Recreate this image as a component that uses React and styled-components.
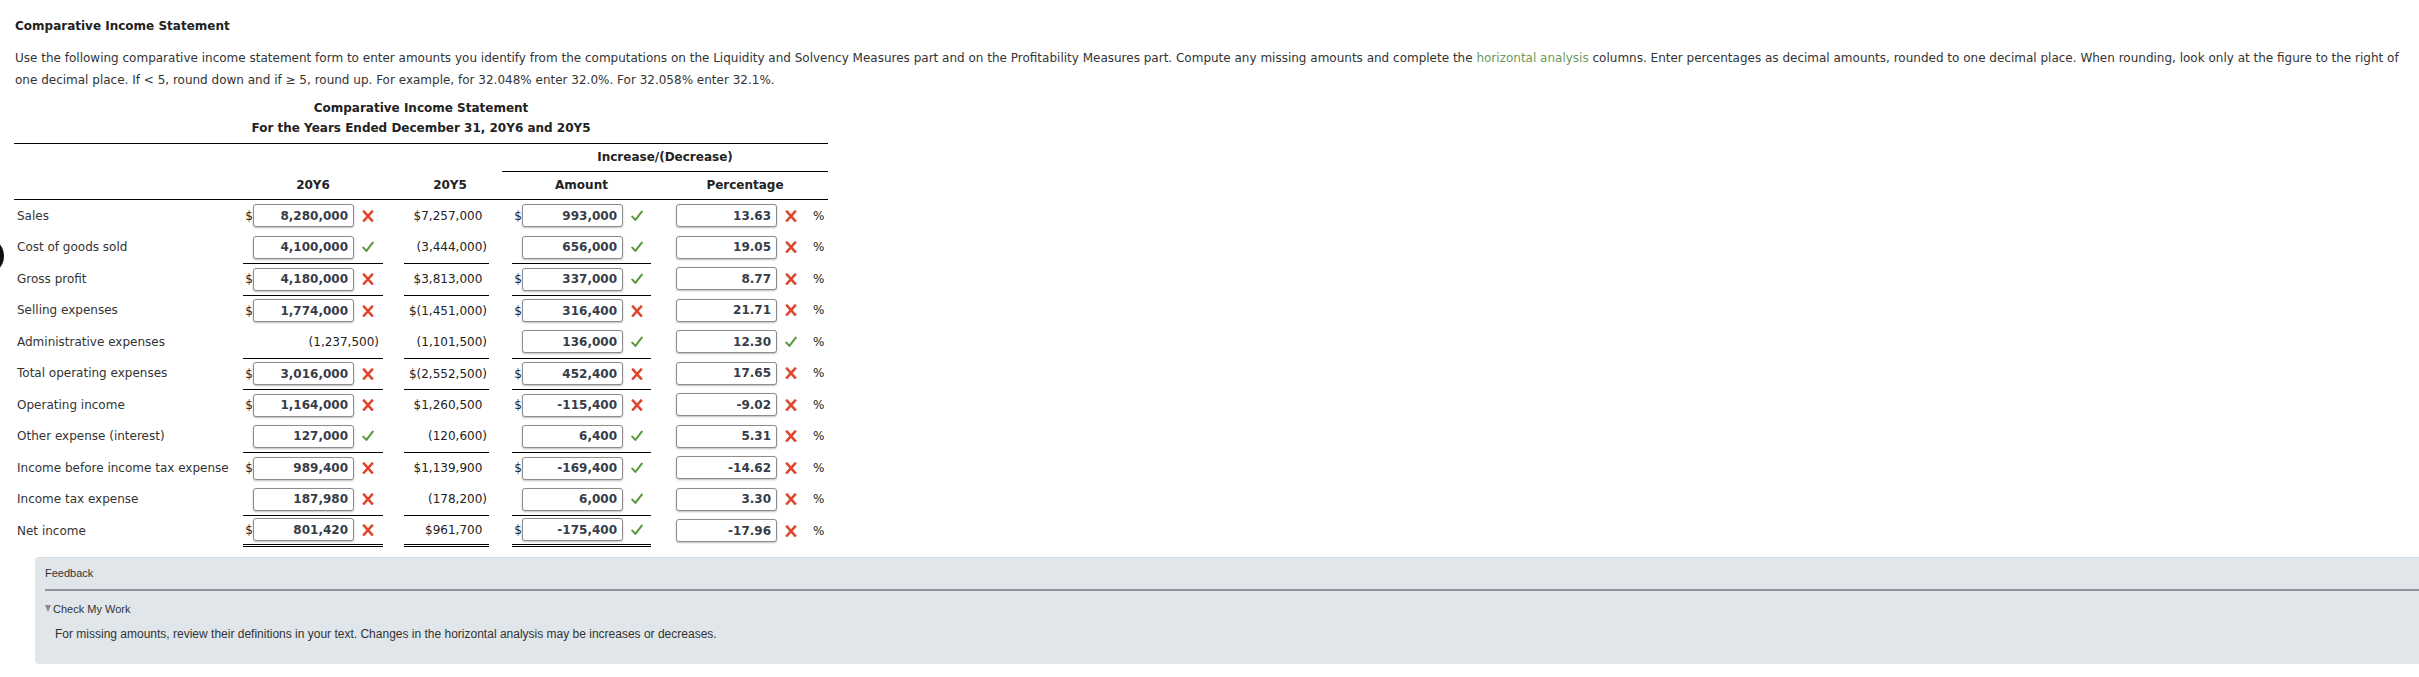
//-----------------------------------------------------------------------------
// Imports
//-----------------------------------------------------------------------------
import React from 'react'
import styled, { createGlobalStyle } from 'styled-components'
//-----------------------------------------------------------------------------
// Data
//-----------------------------------------------------------------------------
const rows = [
  { label: 'Sales', y6: { dollar: true, value: '8,280,000', ok: false }, y5: '$7,257,000', amt: { dollar: true, value: '993,000', ok: true }, pct: { value: '13.63', ok: false } },
  { label: 'Cost of goods sold', y6: { value: '4,100,000', ok: true }, y5: '(3,444,000)', amt: { value: '656,000', ok: true }, pct: { value: '19.05', ok: false } },
  { label: 'Gross profit', rule: true, y6: { dollar: true, value: '4,180,000', ok: false }, y5: '$3,813,000', amt: { dollar: true, value: '337,000', ok: true }, pct: { value: '8.77', ok: false } },
  { label: 'Selling expenses', rule: true, y6: { dollar: true, value: '1,774,000', ok: false }, y5: '$(1,451,000)', amt: { dollar: true, value: '316,400', ok: false }, pct: { value: '21.71', ok: false } },
  { label: 'Administrative expenses', y6: { text: '(1,237,500)' }, y5: '(1,101,500)', amt: { value: '136,000', ok: true }, pct: { value: '12.30', ok: true } },
  { label: 'Total operating expenses', rule: true, y6: { dollar: true, value: '3,016,000', ok: false }, y5: '$(2,552,500)', amt: { dollar: true, value: '452,400', ok: false }, pct: { value: '17.65', ok: false } },
  { label: 'Operating income', rule: true, y6: { dollar: true, value: '1,164,000', ok: false }, y5: '$1,260,500', amt: { dollar: true, value: '-115,400', ok: false }, pct: { value: '-9.02', ok: false } },
  { label: 'Other expense (interest)', y6: { value: '127,000', ok: true }, y5: '(120,600)', amt: { value: '6,400', ok: true }, pct: { value: '5.31', ok: false } },
  { label: 'Income before income tax expense', rule: true, y6: { dollar: true, value: '989,400', ok: false }, y5: '$1,139,900', amt: { dollar: true, value: '-169,400', ok: true }, pct: { value: '-14.62', ok: false } },
  { label: 'Income tax expense', y6: { value: '187,980', ok: false }, y5: '(178,200)', amt: { value: '6,000', ok: true }, pct: { value: '3.30', ok: false } },
  { label: 'Net income', rule: true, total: true, y6: { dollar: true, value: '801,420', ok: false }, y5: '$961,700', amt: { dollar: true, value: '-175,400', ok: true }, pct: { value: '-17.96', ok: false } }
]
//-----------------------------------------------------------------------------
// Icons
//-----------------------------------------------------------------------------
const Mark = ({ ok }) => (
  <MarkBox>
    {ok ? (
      <svg width="12" height="12" viewBox="0 0 12 12">
        <path d="M1.3 6.6 L4.4 9.9 L10.8 1.6" fill="none" stroke="#5a9a3c" strokeWidth="2.1" strokeLinecap="round" strokeLinejoin="round" />
      </svg>
    ) : (
      <svg width="12" height="12" viewBox="0 0 12 12">
        <path d="M2 1.6 L10 10.6 M10 1.6 L2 10.6" fill="none" stroke="#e2432b" strokeWidth="2.5" strokeLinecap="square" />
      </svg>
    )}
  </MarkBox>
)

const Entry = ({ dollar, value, ok }) => (
  <>
    <DollarSlot>{dollar ? '$' : ''}</DollarSlot>
    <AnswerBox>{value}</AnswerBox>
    <Mark ok={ok} />
  </>
)

const Figure = ({ value }) => {
  const closed = value.endsWith(')')
  return (
    <span>
      {value}
      {!closed && <Hang>)</Hang>}
    </span>
  )
}
//-----------------------------------------------------------------------------
// Component
//-----------------------------------------------------------------------------
export default function App() {
  return (
    <>
      <GlobalStyle />
      <EdgeButton />
      <Page>
        <Heading>Comparative Income Statement</Heading>
        <Instructions>
          Use the following comparative income statement form to enter amounts you identify from the computations on the Liquidity and Solvency Measures part and on the Profitability Measures part. Compute any missing amounts and complete the <Glossary>horizontal analysis</Glossary> columns. Enter percentages as decimal amounts, rounded to one decimal place. When rounding, look only at the figure to the right of one decimal place. If &lt; 5, round down and if ≥ 5, round up. For example, for 32.048% enter 32.0%. For 32.058% enter 32.1%.
        </Instructions>

        <Statement>
          <StatementTitle>
            <div>Comparative Income Statement</div>
            <div>For the Years Ended December 31, 20Y6 and 20Y5</div>
          </StatementTitle>

          <HeaderBand>
            <Row header>
              <IncreaseHead>Increase/(Decrease)</IncreaseHead>
            </Row>
            <Row header>
              <span />
              <ColHead>20Y6</ColHead>
              <span />
              <ColHead shift={7}>20Y5</ColHead>
              <span />
              <ColHead>Amount</ColHead>
              <span />
              <ColHead shift={-14}>Percentage</ColHead>
            </Row>
          </HeaderBand>

          {rows.map(r => (
            <Row key={r.label}>
              <Label>{r.label}</Label>
              <InputCell rule={r.rule} total={r.total}>
                {r.y6.text ? <PlainAmount>{r.y6.text}</PlainAmount> : <Entry {...r.y6} />}
              </InputCell>
              <span />
              <PriorCell rule={r.rule} total={r.total}>
                <Figure value={r.y5} />
              </PriorCell>
              <span />
              <InputCell rule={r.rule} total={r.total}>
                <Entry {...r.amt} />
              </InputCell>
              <span />
              <PercentCell>
                <AnswerBox>{r.pct.value}</AnswerBox>
                <Mark ok={r.pct.ok} />
                <Percent>%</Percent>
              </PercentCell>
            </Row>
          ))}
        </Statement>

        <Feedback>
          <FeedbackTitle>Feedback</FeedbackTitle>
          <CheckRow>
            <Caret />
            Check My Work
          </CheckRow>
          <Hint>For missing amounts, review their definitions in your text. Changes in the horizontal analysis may be increases or decreases.</Hint>
        </Feedback>
      </Page>
    </>
  )
}
//-----------------------------------------------------------------------------
// Styled Components
//-----------------------------------------------------------------------------
const GlobalStyle = createGlobalStyle`
  body {
    margin: 0;
    background: #fff;
    font-family: "DejaVu Sans", Verdana, sans-serif;
    font-size: 12px;
    color: #333;
    overflow: hidden;
  }
`

const columns = '229px 140px 21px 85px 23px 139px 25px 152px'

const Page = styled.div`
  padding: 18px 13px 20px 15px;
`

const EdgeButton = styled.div`
  position: absolute;
  left: -31px;
  top: 238px;
  width: 35px;
  height: 36px;
  border-radius: 50%;
  background: #111;
`

const Heading = styled.div`
  font-weight: bold;
  line-height: 16px;
  color: #222;
`

const Instructions = styled.p`
  margin: 13px 0 0;
  line-height: 22px;
  color: #333;
`

const Glossary = styled.span`
  color: #6b9a5c;
`

const Statement = styled.div`
  width: 814px;
  margin-left: -1px;
  color: #222;
`

const StatementTitle = styled.div`
  margin-top: 7px;
  margin-bottom: 5px;
  font-weight: bold;
  line-height: 20px;
  text-align: center;
`

const HeaderBand = styled.div`
  border-top: 1px solid #000;
  border-bottom: 1px solid #000;
`

const Row = styled.div`
  display: grid;
  grid-template-columns: ${columns};
  height: ${props => props.header ? '27.5px' : '31.5px'};
  align-items: stretch;
  font-weight: ${props => props.header ? 'bold' : 'normal'};
`

const IncreaseHead = styled.div`
  grid-column: 5 / -1;
  margin-left: 13px;
  display: flex;
  align-items: center;
  justify-content: center;
  border-bottom: 1px solid #000;
`

const ColHead = styled.div`
  display: flex;
  align-items: center;
  justify-content: center;
  padding-left: ${props => props.shift > 0 ? props.shift : 0}px;
  padding-right: ${props => props.shift < 0 ? -props.shift : 0}px;
`

const Label = styled.div`
  display: flex;
  align-items: center;
  padding-left: 3px;
  white-space: nowrap;
  color: #333;
`

const ruled = props => props.rule ? 'border-top: 1px solid #000;' : ''
const doubled = props => props.total ? 'border-bottom: 3px double #000;' : ''

const InputCell = styled.div`
  display: flex;
  align-items: center;
  box-sizing: border-box;
  ${ruled}
  ${doubled}
`

const PriorCell = styled.div`
  display: flex;
  align-items: center;
  justify-content: flex-end;
  padding-right: 2px;
  box-sizing: border-box;
  ${ruled}
  ${doubled}
`

const PercentCell = styled.div`
  display: flex;
  align-items: center;
`

const Hang = styled.span`
  visibility: hidden;
`

const PlainAmount = styled.div`
  margin-left: auto;
  padding-right: 4px;
`

const DollarSlot = styled.span`
  width: 10px;
  text-align: right;
  flex-shrink: 0;
`

const AnswerBox = styled.div`
  box-sizing: border-box;
  width: 101px;
  height: 23px;
  padding: 0 5px;
  display: flex;
  align-items: center;
  justify-content: flex-end;
  border: 1px solid #8c8c8c;
  border-radius: 3px;
  box-shadow: 0 1px 2px rgba(0, 0, 0, 0.25);
  background: #fff;
  font-weight: bold;
  color: #363d48;
  flex-shrink: 0;
`

const MarkBox = styled.span`
  display: inline-flex;
  margin-left: 8px;
  width: 12px;
`

const Percent = styled.span`
  margin-left: 16px;
`

const Feedback = styled.div`
  margin: 10px -13px 0 20px;
  padding: 0 0 22px 10px;
  background: #e1e6ea;
  border-top: 1px solid #d6dbdf;
  border-radius: 4px 0 0 4px;
  font-family: "Liberation Sans", Arial, sans-serif;
  color: #333;
`

const FeedbackTitle = styled.div`
  padding: 7px 0 8px;
  line-height: 16px;
  font-size: 11px;
  border-bottom: 2px solid #8f959a;
`

const CheckRow = styled.div`
  display: flex;
  align-items: center;
  gap: 2px;
  margin-top: 10px;
  line-height: 16px;
  font-size: 11px;
`

const Caret = styled.span`
  width: 0;
  height: 0;
  border-left: 3px solid transparent;
  border-right: 3px solid transparent;
  border-top: 7px solid #8a8a8a;
`

const Hint = styled.div`
  margin-top: 9px;
  padding-left: 10px;
  line-height: 16px;
  font-size: 12px;
`
